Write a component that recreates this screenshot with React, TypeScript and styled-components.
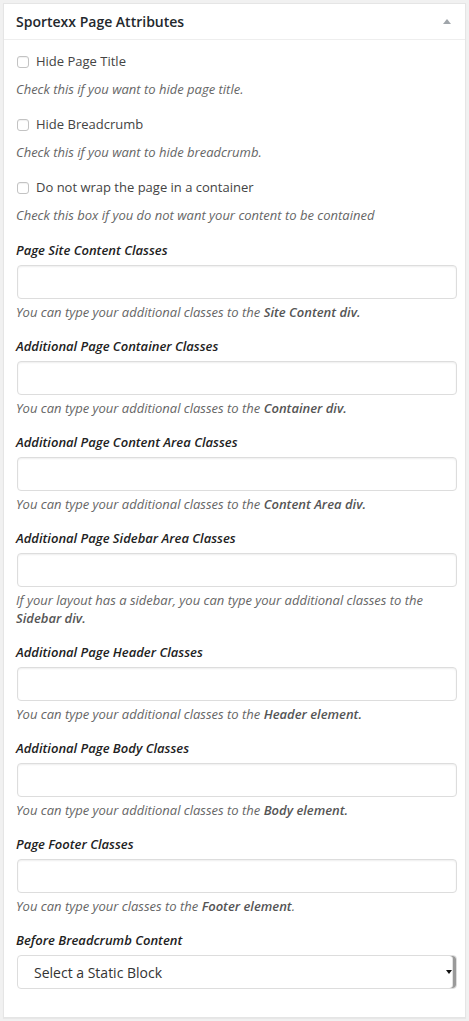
import React from "react";
import styled, { createGlobalStyle } from "styled-components";

const GlobalStyle = createGlobalStyle`
  body {
    margin: 0;
    padding: 3px;
    background: #f1f1f1;
    font-family: "Open Sans", "Liberation Sans", sans-serif;
    font-size: 13px;
    color: #444;
  }
`;

const Panel = styled.div`
  width: 461px;
  background: #fff;
  border: 1px solid #e5e5e5;
  box-shadow: 0 1px 1px rgba(0, 0, 0, 0.04);
`;

const Header = styled.div`
  height: 35px;
  display: flex;
  align-items: center;
  justify-content: space-between;
  padding: 0 14px 0 12px;
  border-bottom: 1px solid #eee;
`;

const Title = styled.h2`
  margin: 0;
  font-size: 14px;
  font-weight: 600;
  color: #23282d;
`;

const Body = styled.div`
  padding: 12px 12px 28px 12px;
`;

const CheckGroup = styled.div`
  margin-bottom: 17px;
`;

const CheckRow = styled.label`
  display: flex;
  align-items: center;
  gap: 7px;
  line-height: 18px;
  padding-left: 1px;
`;

const Box = styled.input`
  appearance: none;
  margin: 2px 0 0 0;
  width: 12px;
  height: 12px;
  border: 1px solid #c3c3c3;
  border-radius: 3px;
  background: #fff;
  box-shadow: inset 0 1px 1px rgba(0, 0, 0, 0.06);
`;

const Desc = styled.p<{ $gap?: number }>`
  margin: ${(p) => p.$gap ?? 10}px 0 0 0;
  font-style: italic;
  color: #666;
  line-height: 18px;

  b {
    font-weight: 600;
    color: #555;
  }
`;

const FieldGroup = styled.div`
  margin-bottom: 16px;
`;

const FieldLabel = styled.div`
  font-style: italic;
  font-weight: 600;
  color: #222;
  line-height: 18px;
  margin-bottom: 6px;
`;

const TextInput = styled.input`
  display: block;
  box-sizing: border-box;
  width: 440px;
  height: 34px;
  margin-left: 1px;
  border: 1px solid #ddd;
  border-radius: 4px;
  box-shadow: inset 0 1px 2px rgba(0, 0, 0, 0.07);
  background: #fff;
  font-family: inherit;
  font-size: 14px;
`;

const SelectWrap = styled.div`
  position: relative;
  width: 440px;
  margin-left: 1px;
`;

const Select = styled.select`
  display: block;
  box-sizing: border-box;
  width: 100%;
  height: 34px;
  appearance: none;
  border: 1px solid #ddd;
  border-radius: 4px;
  box-shadow: inset -3px 0 0 #9a9a9a, inset -4px 0 0 #e2e2e2;
  background: #fff;
  padding: 0 16px;
  font-family: inherit;
  font-size: 14px;
  color: #333;
`;

const SelectArrow = styled.span`
  position: absolute;
  right: 5px;
  top: 15px;
  width: 0;
  height: 0;
  border-left: 3px solid transparent;
  border-right: 3px solid transparent;
  border-top: 4px solid #111;
  pointer-events: none;
`;

const checks = [
  { label: "Hide Page Title", desc: "Check this if you want to hide page title." },
  { label: "Hide Breadcrumb", desc: "Check this if you want to hide breadcrumb." },
  {
    label: "Do not wrap the page in a container",
    desc: "Check this box if you do not want your content to be contained",
  },
];

const fields: { label: string; pre: string; bold: string; tail?: string }[] = [
  { label: "Page Site Content Classes", pre: "You can type your additional classes to the ", bold: "Site Content div." },
  { label: "Additional Page Container Classes", pre: "You can type your additional classes to the ", bold: "Container div." },
  { label: "Additional Page Content Area Classes", pre: "You can type your additional classes to the ", bold: "Content Area div." },
  {
    label: "Additional Page Sidebar Area Classes",
    pre: "If your layout has a sidebar, you can type your additional classes to the ",
    bold: "Sidebar div.",
  },
  { label: "Additional Page Header Classes", pre: "You can type your additional classes to the ", bold: "Header element." },
  { label: "Additional Page Body Classes", pre: "You can type your additional classes to the ", bold: "Body element." },
  { label: "Page Footer Classes", pre: "You can type your classes to the ", bold: "Footer element", tail: "." },
];

export default function App() {
  return (
    <>
      <GlobalStyle />
      <Panel>
        <Header>
          <Title>Sportexx Page Attributes</Title>
          <svg width="8" height="5" viewBox="0 0 8 5">
            <path d="M0 5 L4 0 L8 5 Z" fill="#a0a5aa" />
          </svg>
        </Header>
        <Body>
          {checks.map((c) => (
            <CheckGroup key={c.label}>
              <CheckRow>
                <Box type="checkbox" />
                {c.label}
              </CheckRow>
              <Desc>{c.desc}</Desc>
            </CheckGroup>
          ))}
          {fields.map((f) => (
            <FieldGroup key={f.label}>
              <FieldLabel>{f.label}</FieldLabel>
              <TextInput type="text" />
              <Desc $gap={4}>
                {f.pre}
                <b>{f.bold}</b>
                {f.tail}
              </Desc>
            </FieldGroup>
          ))}
          <FieldLabel>Before Breadcrumb Content</FieldLabel>
          <SelectWrap>
            <Select defaultValue="">
              <option value="">Select a Static Block</option>
            </Select>
            <SelectArrow />
          </SelectWrap>
        </Body>
      </Panel>
    </>
  );
}
